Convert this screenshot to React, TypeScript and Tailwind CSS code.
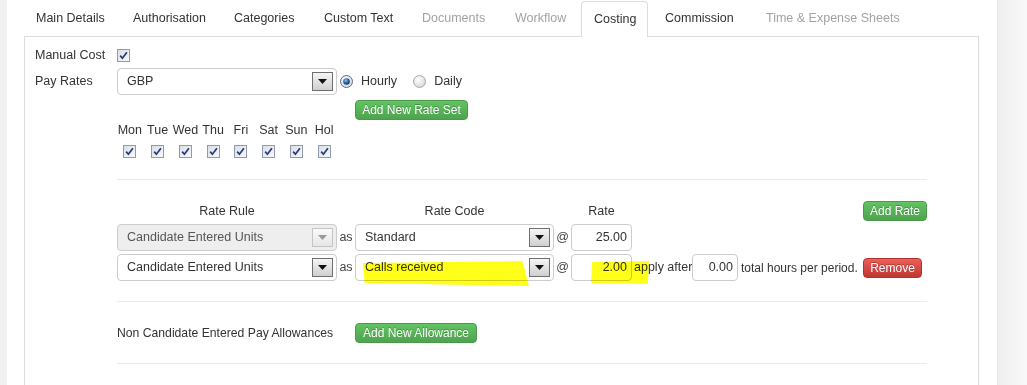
import React from "react";

const tabs = [
  { label: "Main Details", w: "w-[97px]", tone: "text-[#333]" },
  { label: "Authorisation", w: "w-[101px]", tone: "text-[#333]" },
  { label: "Categories", w: "w-[90px]", tone: "text-[#333]" },
  { label: "Custom Text", w: "w-[98px]", tone: "text-[#333]" },
  { label: "Documents", w: "w-[93px]", tone: "text-[#a3a3a3]" },
  { label: "Workflow", w: "w-[78px]", tone: "text-[#a3a3a3]" },
  { label: "Costing", w: "w-[67px] mr-[5px]", tone: "text-[#333]", active: true },
  { label: "Commission", w: "w-[101px]", tone: "text-[#333]" },
  { label: "Time & Expense Sheets", w: "w-[150px]", tone: "text-[#a3a3a3]" },
];

const days = ["Mon", "Tue", "Wed", "Thu", "Fri", "Sat", "Sun", "Hol"];

function Tick() {
  return (
    <span className="inline-flex h-[13px] w-[13px] shrink-0 items-center justify-center border border-[#8e9bb0] bg-gradient-to-br from-[#d9dee7] to-[#f8f9fb]">
      <svg width="9" height="9" viewBox="0 0 9 9">
        <path d="M1.2 4.6 L3.4 7.2 L7.9 1.2" fill="none" stroke="#26397a" strokeWidth="1.7" />
      </svg>
    </span>
  );
}

function Radio({ on }: { on?: boolean }) {
  return (
    <svg width="13" height="13" viewBox="0 0 13 13" className="shrink-0">
      <defs>
        <radialGradient id="rbg" cx="40%" cy="35%" r="70%">
          <stop offset="0" stopColor="#ffffff" />
          <stop offset="1" stopColor="#d6d6d6" />
        </radialGradient>
        <radialGradient id="rdot" cx="40%" cy="35%" r="65%">
          <stop offset="0" stopColor="#8fc4f0" />
          <stop offset="0.5" stopColor="#2f6fb4" />
          <stop offset="1" stopColor="#0c3467" />
        </radialGradient>
      </defs>
      <circle cx="6.5" cy="6.5" r="6" fill="url(#rbg)" stroke={on ? "#5a6f88" : "#a8a8a8"} />
      {on && <circle cx="6.5" cy="6.5" r="3.3" fill="url(#rdot)" />}
    </svg>
  );
}

function Arrow({ off }: { off?: boolean }) {
  return (
    <span
      className={
        off
          ? "flex h-[19px] w-[21px] items-center justify-center border border-[#c4c4c4] bg-gradient-to-b from-[#fafafa] to-[#e6e6e6]"
          : "flex h-[19px] w-[21px] items-center justify-center border border-[#6f6f6f] bg-gradient-to-b from-[#f6f6f6] to-[#cfcfcf]"
      }
    >
      <svg width="9" height="5" viewBox="0 0 9 5">
        <path d="M0 0 H9 L4.5 5 Z" fill={off ? "#9a9a9a" : "#111"} />
      </svg>
    </span>
  );
}

function Select({ text, w, off, children }: { text: string; w: string; off?: boolean; children?: React.ReactNode }) {
  return (
    <div
      className={`relative flex h-[27px] ${w} shrink-0 items-center justify-between rounded-[4px] border border-[#ccc] pl-[9px] pr-[3px] ${
        off ? "bg-[#eee] text-[#555]" : "bg-white text-[#333]"
      }`}
    >
      <span className="relative">{text}</span>
      <Arrow off={off} />
      {children}
    </div>
  );
}

function Btn({ label, w, red }: { label: string; w: string; red?: boolean }) {
  return (
    <button
      className={`flex h-[20px] ${w} shrink-0 items-center justify-center rounded-[4px] border text-[12px] leading-none text-white [text-shadow:0_-1px_0_rgba(0,0,0,0.25)] ${
        red
          ? "border-[#b3322c] bg-gradient-to-b from-[#ee5f5b] to-[#bd362f]"
          : "border-[#4a9a4a] bg-gradient-to-b from-[#62c462] to-[#4fa34f]"
      }`}
    >
      {label}
    </button>
  );
}

function Input({ value, w, children }: { value: string; w: string; children?: React.ReactNode }) {
  return (
    <div className={`relative flex h-[27px] ${w} shrink-0 items-center justify-end rounded-[4px] border border-[#ccc] bg-white pr-[4px] text-[#333]`}>
      <span className="relative">{value}</span>
      {children}
    </div>
  );
}

export default function App() {
  return (
    <div className="flex h-[385px] w-[1027px] overflow-hidden bg-white font-['Liberation_Sans',Arial,sans-serif] text-[12.5px] text-[#333]">
      <div className="w-[7px] shrink-0 bg-[#f1f1f1]" />

      <div className="flex w-[990px] flex-col pl-[17px]">
        {/* tab strip */}
        <div className="flex h-[37px] w-[955px] shrink-0 items-end border-b border-[#ddd]">
          {tabs.map((t) => (
            <div
              key={t.label}
              className={`flex h-[35px] shrink-0 items-center ${t.w} ${t.tone} ${
                t.active
                  ? "-mb-px h-[36px] rounded-t-[4px] border border-b-0 border-[#ddd] bg-white pl-[12px]"
                  : "pl-[12px]"
              }`}
            >
              <span className="whitespace-nowrap">{t.label}</span>
            </div>
          ))}
        </div>

        {/* costing panel */}
        <div className="w-[955px] flex-1 border-x border-[#ddd] pl-[10px]">
          <div className="mt-[8px] flex h-[20px] items-center">
            <span className="w-[82px]">Manual Cost</span>
            <Tick />
          </div>

          <div className="mt-[3px] flex h-[27px] items-center">
            <span className="w-[82px]">Pay Rates</span>
            <Select text="GBP" w="w-[220px]" />
            <span className="ml-[3px]">
              <Radio on />
            </span>
            <span className="ml-[8px]">Hourly</span>
            <span className="ml-[16px]">
              <Radio />
            </span>
            <span className="ml-[8px]">Daily</span>
          </div>

          <div className="pl-[82px]">
            <div className="mt-[5px] pl-[238px]">
              <Btn label="Add New Rate Set" w="w-[113px]" />
            </div>

            <div className="-ml-[1px] mt-[3px] grid w-[222px] grid-cols-8">
              {days.map((d) => (
                <span key={d} className="h-[14px] text-center leading-[14px]">
                  {d}
                </span>
              ))}
              {days.map((d) => (
                <span key={d + "c"} className="mt-[8px] flex justify-center">
                  <Tick />
                </span>
              ))}
            </div>

            <div className="mt-[21px] h-px w-[810px] bg-[#eaeaea]" />

            {/* rate rules */}
            <div className="mt-[21px] flex h-[20px] w-[810px] items-center">
              <span className="w-[220px] text-center">Rate Rule</span>
              <span className="w-[18px]" />
              <span className="w-[199px] text-center">Rate Code</span>
              <span className="w-[17px]" />
              <span className="w-[61px] text-center">Rate</span>
              <span className="ml-auto">
                <Btn label="Add Rate" w="w-[64px]" />
              </span>
            </div>

            <div className="mt-[3px] flex h-[27px] items-center">
              <Select text="Candidate Entered Units" w="w-[220px]" off />
              <span className="w-[18px] text-center text-[#444]">as</span>
              <Select text="Standard" w="w-[199px]" />
              <span className="w-[17px] text-center text-[#444]">@</span>
              <Input value="25.00" w="w-[61px]" />
            </div>

            <div className="mt-[3px] flex h-[27px] items-center">
              <Select text="Candidate Entered Units" w="w-[220px]" />
              <span className="w-[18px] text-center text-[#444]">as</span>
              <Select text="Calls received" w="w-[199px]">
                <span className="pointer-events-none absolute left-[7px] top-[6px] h-[25px] w-[166px] bg-[#ffff1a] mix-blend-multiply [clip-path:polygon(0_8%,96%_0,100%_100%,1%_88%)]" />
              </Select>
              <span className="w-[17px] text-center text-[#444]">@</span>
              <Input value="2.00" w="w-[61px]">
                <span className="pointer-events-none absolute left-[19px] top-[6px] z-10 h-[23px] w-[58px] bg-[#ffff1a] mix-blend-multiply [clip-path:polygon(2%_4%,100%_0,98%_100%,0_96%)]" />
              </Input>
              <span className="ml-[2px] w-[58px] whitespace-nowrap">apply after</span>
              <Input value="0.00" w="w-[46px]" />
              <span className="ml-[3px] w-[122px] whitespace-nowrap text-[12px]">total hours per period.</span>
              <Btn label="Remove" w="w-[59px]" red />
            </div>

            <div className="mt-[20px] h-px w-[810px] bg-[#eaeaea]" />

            <div className="mt-[21px] flex h-[20px] items-center">
              <span className="w-[238px] whitespace-nowrap text-[12.2px]">Non Candidate Entered Pay Allowances</span>
              <Btn label="Add New Allowance" w="w-[122px]" />
            </div>

            <div className="mt-[20px] h-px w-[810px] bg-[#eaeaea]" />
          </div>
        </div>
      </div>

      <div className="w-[30px] shrink-0 border-l border-[#e6e6e6] bg-gradient-to-r from-[#efefef] to-[#f8f8f8]" />
    </div>
  );
}
